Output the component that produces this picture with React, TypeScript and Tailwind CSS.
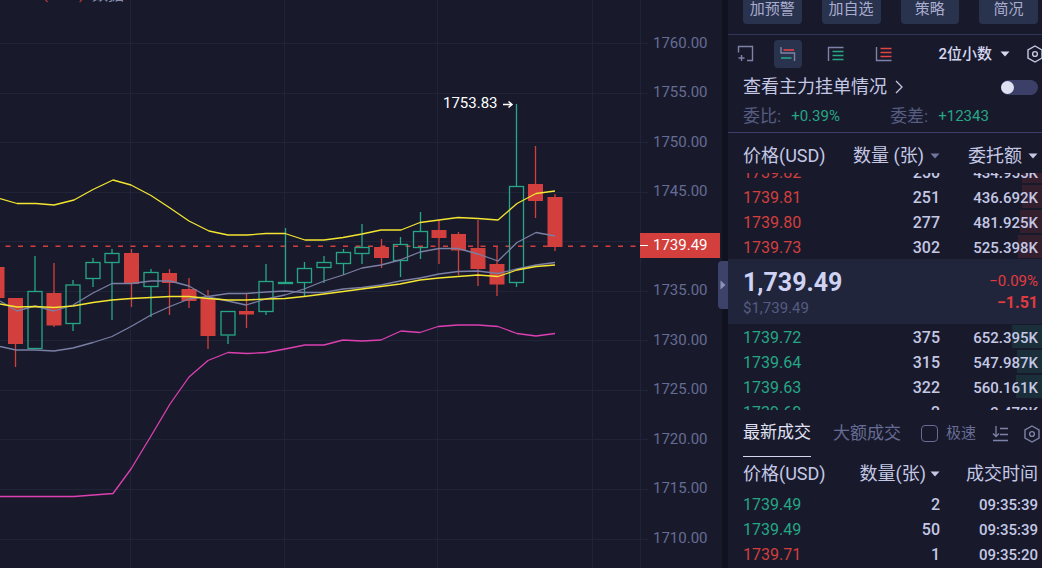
import React, { useState } from "react";

const UP = "#26a684";
const DOWN = "#d23f3d";

// x, wick top, body top, body bottom, wick bottom, direction
type Candle = [number, number, number, number, number, "up" | "down"];

const candles: Candle[] = [
  [-3, 267, 267, 298, 298, "down"],
  [15.5, 298, 298, 344, 367, "down"],
  [35, 256, 291, 349, 349, "up"],
  [54, 263, 293, 325.5, 327, "down"],
  [73, 280, 284.5, 324, 331, "up"],
  [93, 258, 262, 279, 287, "up"],
  [112, 249, 253, 263, 320, "up"],
  [131.5, 249, 253, 284, 307, "down"],
  [151, 269, 272, 287, 317, "up"],
  [169.5, 269, 273, 283, 315, "down"],
  [189, 278, 289, 301, 308, "down"],
  [208, 290, 298, 336, 349, "down"],
  [228, 311, 311, 335.5, 344, "up"],
  [246.5, 294, 311, 314.5, 328, "down"],
  [266, 264, 281, 312, 315, "up"],
  [285.5, 228, 282, 284, 284, "up"],
  [304.5, 262, 268, 283, 296, "up"],
  [324, 256, 262, 268, 283, "up"],
  [343.5, 249, 252, 264, 275, "up"],
  [362, 224, 247, 254, 264, "up"],
  [381.5, 239, 247, 258, 268, "down"],
  [400.5, 237, 244, 261, 277, "up"],
  [420.5, 212, 231, 248, 259, "up"],
  [439, 220, 230, 238, 264, "down"],
  [458.5, 232, 234, 250.5, 275, "down"],
  [478, 220, 248, 269, 286, "down"],
  [497, 246, 264, 284.5, 296, "down"],
  [516.5, 104, 186, 283, 287, "up"],
  [535.5, 146, 184, 201, 218, "down"],
  [555, 194, 197, 247, 251, "down"],
];

const lines = [
  { color: "#7a7fa3", points: "0,301 17,311 35,306 54,311 73,305 93,293 112,283.5 131,283.5 151,281 170,281 189,286 208,297 228,301 246,305 266,299 285,295 304,289 324,281 343,275 362,268 381,265 400,260 420,252 439,248.5 458,248.5 478,254 498,261 517,242.5 536,232.5 555,236" },
  { color: "#7a7fa3", points: "0,346.5 16,350 35,350 54,351 73,348 93,342.5 112,336.5 131,326.5 151,315 170,306.5 189,299 208,296.5 228,293.5 246,293.5 266,292 285,291 304,292.5 324,292.5 343,289 362,287.5 381,285 400,281 420,278 439,274 458,271.5 478,271 498,273.5 517,269 536,265 555,262.5" },
  { color: "#f3e530", points: "0,304 17,307 35,306.5 54,307.5 73,306 93,302.5 112,300 131,298.5 151,297.5 170,296.5 189,296.5 208,298.5 228,300 246,300 266,299 285,298.5 304,296.5 324,294 343,291.5 362,289 381,286.5 400,284 420,280 439,278 458,276.5 478,275 498,276.5 517,270 536,266.5 555,265" },
  { color: "#f3e530", points: "0,198.5 17,203.5 36,203.5 54,205 74,200 93,189.5 113,180 131,185 151,195.5 170,208 189,221 209,231 228,235 247,235 266,233.5 285,233.5 305,240 324,240 343,237.5 362,234 381,230 401,230 420,222.5 439,220 458,217.5 478,218.5 498,220 517,203.5 536,193.5 555,191" },
  { color: "#dd40b0", points: "0,496.5 74,496.5 113,493.5 131,469 151,436 170,404 189,377 208,360.5 228,352.5 247,353.5 266,352.5 285,349 305,345 324,345 343,340 362,341 381,340 401,331 420,332.5 438,326.5 458,325 478,325 498,326.5 517,333.5 536,336 555,333.5" },
];

const axisPrices = ["1760.00", "1755.00", "1750.00", "1745.00", "", "1735.00", "1730.00", "1725.00", "1720.00", "1715.00", "1710.00"];

const asks = [
  ["1739.82", "250", "434.955K", "w-[20px]"],
  ["1739.81", "251", "436.692K", "w-[20px]"],
  ["1739.80", "277", "481.925K", "w-[22px]"],
  ["1739.73", "302", "525.398K", "w-[24px]"],
];
const bids = [
  ["1739.72", "375", "652.395K", "w-[30px]"],
  ["1739.64", "315", "547.987K", "w-[25px]"],
  ["1739.63", "322", "560.161K", "w-[26px]"],
  ["1739.60", "2", "3.479K", "w-0"],
];
const trades = [
  ["1739.49", "2", "09:35:39", "up"],
  ["1739.49", "50", "09:35:39", "up"],
  ["1739.71", "1", "09:35:20", "down"],
];

function Chart() {
  return (
    <svg className="block w-full" viewBox="0 0 640 568" overflow="visible" role="img" aria-label="K线图">
      <g stroke="#1f2438" strokeWidth="1">
        {axisPrices.map((_, i) => {
          const y = Math.round(43 + i * 49.55) + 0.5;
          return <line key={i} x1="0" x2="648" y1={y} y2={y} />;
        })}
        {[130.5, 284.5, 437.5, 592.5, 640.5].map((x) => (
          <line key={x} x1={x} x2={x} y1="0" y2="568" />
        ))}
      </g>
      <g fontFamily="Roboto, 'Noto Sans CJK SC', sans-serif" fontSize="14">
        <text x="43" y="-1" fill={DOWN}>(</text>
        <text x="79" y="-1" fill={DOWN}>)</text>
        <text x="92" y="0" fill="#8a8fb0" fontSize="16">数据</text>
      </g>
      <line x1="5.500" x2="640" y1="246.3" y2="246.3" stroke={DOWN} strokeWidth="1.4" strokeDasharray="5 7.5" />
      {candles.map(([x, high, top, bottom, low, dir]) =>
        dir === "up" ? (
          <g key={x} stroke={UP} strokeWidth="1.3" fill="none">
            <path d={`M${x} ${high}V${top}M${x} ${bottom}V${low}`} />
            <rect x={x - 7} y={top + 0.5} width="14" height={Math.max(1, bottom - top - 1)} />
          </g>
        ) : (
          <g key={x} stroke={DOWN} fill={DOWN}>
            <path d={`M${x} ${high}V${low}`} strokeWidth="1.3" />
            <rect x={x - 7.5} y={top} width="15" height={bottom - top} stroke="none" />
          </g>
        ),
      )}
      {lines.map((l, i) => (
        <polyline key={i} points={l.points} stroke={l.color} strokeWidth="1.3" fill="none" strokeLinejoin="round" />
      ))}
      <text x="443" y="108" fontFamily="Roboto, sans-serif" fontSize="15" fill="#fff">1753.83</text>
      <path d="M503 104.5h8M508.500 101.500l3.500 3-3.500 3" stroke="#fff" strokeWidth="1.5" fill="none" />
    </svg>
  );
}

function Caret({ className }: { className: string }) {
  return (
    <svg className={className} width="10" height="6" viewBox="0 0 10 6" fill="currentColor" aria-hidden="true">
      <path d="M0.500 0.500h9L5 5.500z" />
    </svg>
  );
}

function HexIcon() {
  return (
    <svg width="18" height="18" viewBox="0 0 18 18" fill="none" stroke="currentColor" strokeWidth="1.4" aria-hidden="true">
      <path d="M9 1l7 4v8l-7 4-7-4V5z" />
      <circle cx="9" cy="9" r="2.400" />
    </svg>
  );
}

function BookRows({ rows, side }: { rows: string[][]; side: "ask" | "bid" }) {
  return (
    <tbody>
      {rows.map(([price, qty, total, bar]) => (
        <tr key={price} className="h-[25px] leading-5">
          <td className={`p-0 pt-0.5 ${side === "ask" ? "text-[#d23f3d]" : "text-[#26a684]"}`}>{price}</td>
          <td className="p-0 pt-0.5 text-right font-medium">{qty}</td>
          <td className="relative p-0 pr-1 pt-0.5 text-right font-medium">
            <span className={`absolute inset-y-px right-0 ${bar} ${side === "ask" ? "bg-[#d23f3d]/15" : "bg-[#26a684]/15"}`} />
            <span className="relative text-[15px]">{total}</span>
          </td>
        </tr>
      ))}
    </tbody>
  );
}

function Columns() {
  return (
    <colgroup>
      <col />
      <col className="w-[97px]" />
      <col className="w-[102px]" />
    </colgroup>
  );
}

function Toolbar() {
  const [view, setView] = useState(1);
  const icons = [
    <path key="a" d="M1.500 7.500V1.500h14v14h-5.500M4.500 10v6M1.500 13h6" stroke="#7d82a6" />,
    <g key="b">
      <path d="M2 2v6h13.500v8" stroke="#7d82a6" />
      <path d="M4.500 5h10.500" stroke="#e24444" strokeWidth="1.600" />
      <path d="M2 13h10.500" stroke={UP} strokeWidth="1.600" />
    </g>,
    <g key="c">
      <path d="M1.500 16V2.500H16.500" stroke="#7d82a6" />
      <path d="M5.500 6.500h11M5.500 10.500h11M5.500 14.500h11" stroke={UP} />
    </g>,
    <g key="d">
      <path d="M1.500 2v13.500H16.500" stroke="#7d82a6" />
      <path d="M5.500 3.500h11M5.500 7.500h11M5.500 11.500h11" stroke="#e24444" />
    </g>,
  ];
  const names = ["新窗口", "买卖盘", "买盘", "卖盘"];
  return (
    <div className="flex h-[38px] items-center pl-1">
      <div className="flex gap-5">
        {icons.map((icon, i) => (
          <button
            key={names[i]}
            type="button"
            aria-label={names[i]}
            onClick={() => setView(i)}
            className={`flex size-7 items-center justify-center rounded first:-mr-1.5 ${view === i ? "bg-[#2a334d]" : ""}`}
          >
            <svg width="18" height="18" viewBox="0 0 18 18" fill="none" strokeWidth="1.400">{icon}</svg>
          </button>
        ))}
      </div>
      <button type="button" className="ml-auto flex items-center gap-2 text-[15px] font-medium text-[#d5d8f0]">
        2位小数
        <Caret className="" />
      </button>
      <button type="button" aria-label="设置" className="-mr-0.5 ml-4 shrink-0 text-[#c5c9e2]">
        <HexIcon />
      </button>
    </div>
  );
}

export default function App() {
  return (
    <main className="flex h-screen overflow-hidden bg-[#181a2c] font-['Roboto','Noto_Sans_CJK_SC',sans-serif] text-[#c5c8e4]">
      <section className="flex min-w-0 flex-1">
        <div className="min-w-0 flex-1">
          <Chart />
        </div>
        <div className="relative w-[82px] shrink-0 pt-[18px]">
          <ol className="grid h-[545px] auto-rows-fr pl-[13px] text-[15px] text-[#666c93]">
            {axisPrices.map((p, i) => (
              <li key={i} className="flex items-center">{p}</li>
            ))}
          </ol>
          <div className="absolute left-0 top-[233px] flex h-[25px] w-20 items-center bg-[#d23f3d] text-[15px] text-white">
            <span className="mr-[5px] h-px w-2 bg-white" />
            1739.49
          </div>
        </div>
      </section>

      <div className="relative w-1.5 shrink-0 bg-[#101220]">
        <button type="button" aria-label="收起面板" className="absolute -left-1 top-[261px] flex h-12 w-2.5 items-center justify-center rounded-l bg-[#3c4268] text-[#8c92b8]">
          <svg width="6" height="10" viewBox="0 0 6 10" fill="currentColor"><path d="M0.500 0.500L5.500 5l-5 4.500z" /></svg>
        </button>
      </div>

      <aside className="w-[314px] shrink-0">
        <nav className="-mt-1.5 flex gap-5 pb-2.5 pl-[15px] pr-1">
          {["加预警", "加自选", "策略", "简况"].map((t) => (
            <button key={t} type="button" className="h-[30px] flex-1 whitespace-nowrap rounded bg-[#2a334d] text-[15px] text-[#a9adcf]">{t}</button>
          ))}
        </nav>
        <div className="border-y border-[#2f3558] border-b-[#3b3e6c]">
          <Toolbar />
          <div className="flex h-7 items-center pl-[15px] pr-1">
            <a href="#orders" className="flex items-center gap-2 text-lg leading-7">
              查看主力挂单情况
              <svg width="8" height="14" viewBox="0 0 8 14" fill="none" stroke="currentColor" strokeWidth="1.300"><path d="M1 1l6 6-6 6" /></svg>
            </a>
            <input type="checkbox" role="switch" aria-label="显示主力挂单" className="ml-auto h-[15px] w-[37px] appearance-none rounded-full bg-[#3c4068] before:block before:h-[13px] before:w-[13px] before:translate-y-px before:rounded-full before:bg-[#dfe1f2] checked:before:translate-x-6" />
          </div>
          <dl className="flex h-[31px] items-center pl-[15px] text-[15px] text-[#26a684]">
            <dt className="mr-2.5 text-[17px] text-[#565c80]">委比:</dt>
            <dd className="w-[99px]">+0.39%</dd>
            <dt className="mr-2.5 text-[17px] text-[#565c80]">委差:</dt>
            <dd>+12343</dd>
          </dl>
        </div>

        <div className="flex h-10 items-center pl-[15px] pr-1 pt-1.5 text-lg leading-6">
          <span>价格(USD)</span>
          <button type="button" className="ml-auto flex items-center gap-1.5">数量 (张)<Caret className="text-[#71769c]" /></button>
          <button type="button" className="ml-7 flex items-center gap-1.5">委托额<Caret className="" /></button>
        </div>
        <div className="flex h-[86px] flex-col justify-end overflow-hidden pl-[15px]">
          <table className="w-full shrink-0 table-fixed border-collapse text-base">
            <Columns />
            <BookRows rows={asks} side="ask" />
          </table>
        </div>

        <div className="flex h-[65px] justify-between bg-[#20253b] pl-[15px] pr-1 pt-2.5">
          <div>
            <div className="text-[25px] font-bold leading-7 text-[#cfd2f2]">1,739.49</div>
            <div className="text-[15px] leading-[22px] text-[#565c80]">$1,739.49</div>
          </div>
          <div className="pt-0.5 text-right leading-5 text-[#e03b3f]">
            <div className="text-[15px]">−0.09%</div>
            <div className="text-base font-bold">−1.51</div>
          </div>
        </div>

        <div className="h-[86px] overflow-hidden pl-[15px]">
          <table className="w-full table-fixed border-collapse text-base">
            <Columns />
            <BookRows rows={bids} side="bid" />
          </table>
        </div>

        <div className="flex h-[47px] pl-[15px] pr-px text-[17px]">
          <button type="button" className="mr-[22px] border-b border-[#d5d8f0] text-[#e0e2f4]">最新成交</button>
          <button type="button" className="mr-5 text-[#666c93]">大额成交</button>
          <div className="flex flex-1 items-center text-[#666c93]">
            <label className="flex items-center gap-2 text-[15px]">
              <input type="checkbox" className="size-[17px] appearance-none rounded-sm border border-[#666c93] checked:bg-[#666c93]" />
              极速
            </label>
            <button type="button" aria-label="排序" className="ml-auto">
              <svg width="17" height="16" viewBox="0 0 17 16" fill="none" stroke="#7d82a6" strokeWidth="1.300"><path d="M4 0v10.500M1 7.500l3 3 3-3M8 2.500h8M8 8.500h8M1 14.500h15" /></svg>
            </button>
            <button type="button" aria-label="成交设置" className="ml-3.5 shrink-0 text-[#7d82a6]"><HexIcon /></button>
          </div>
        </div>

        <table className="ml-[15px] w-[299px] table-fixed border-collapse text-base leading-6">
          <Columns />
          <thead className="text-lg leading-6">
            <tr className="h-[35px]">
              <th className="whitespace-nowrap p-0 pb-0.5 text-left font-normal">价格(USD)</th>
              <th className="p-0 pb-0.5 font-normal">
                <button type="button" className="ml-auto flex items-center gap-1 whitespace-nowrap">数量(张)<Caret className="" /></button>
              </th>
              <th className="p-0 pb-0.5 pr-1 text-right font-normal">成交时间</th>
            </tr>
          </thead>
          <tbody>
            {trades.map(([price, qty, time, dir], i) => (
              <tr key={i} className="h-[25px]">
                <td className={`p-0 ${dir === "up" ? "text-[#26a684]" : "text-[#d23f3d]"}`}>{price}</td>
                <td className="p-0 text-right font-medium">{qty}</td>
                <td className="p-0 pr-1 text-right text-[15px] font-medium">{time}</td>
              </tr>
            ))}
          </tbody>
        </table>
      </aside>
    </main>
  );
}
